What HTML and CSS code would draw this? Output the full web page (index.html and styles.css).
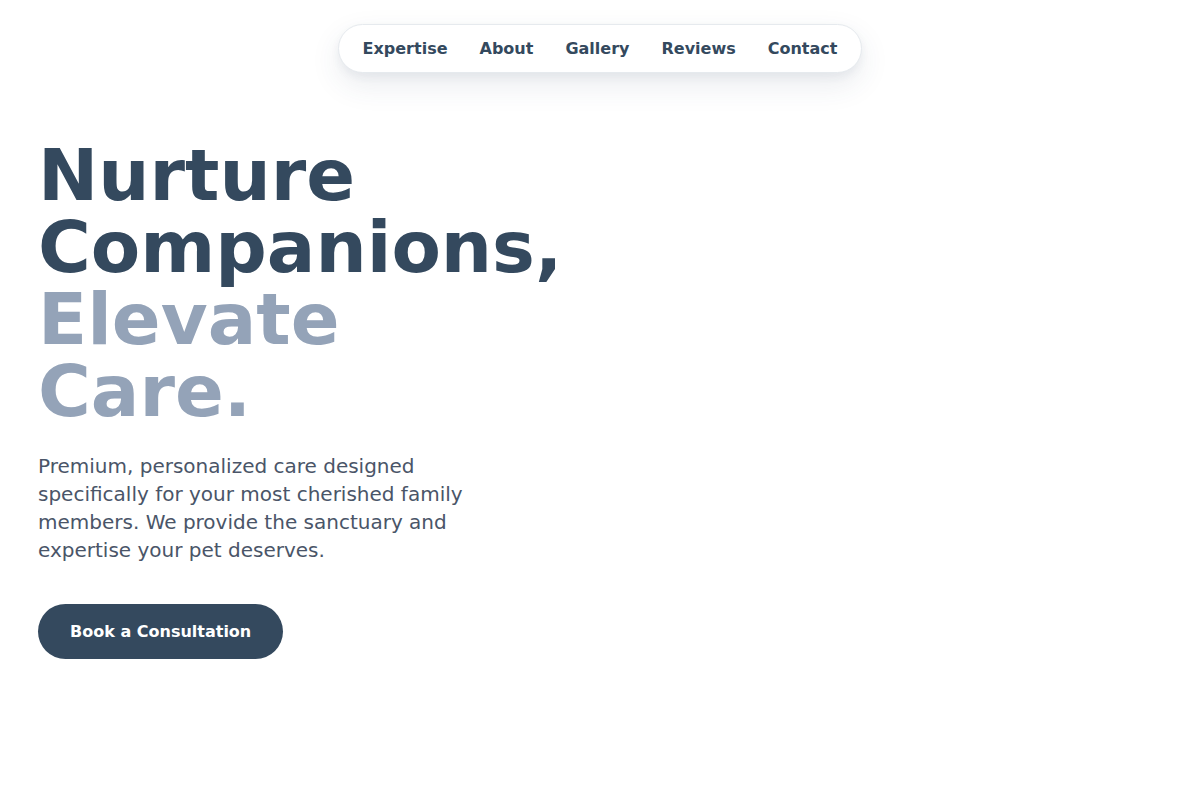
FILE: index.html
```html
<!DOCTYPE html>
<html lang="en">
<head>
<meta charset="utf-8">
<title>Nurture Companions</title>
<link rel="stylesheet" href="styles.css">
</head>
<body>
<header class="topbar">
  <nav class="nav">
    <a href="#" class="nav-link">Expertise</a>
    <a href="#" class="nav-link">About</a>
    <a href="#" class="nav-link">Gallery</a>
    <a href="#" class="nav-link">Reviews</a>
    <a href="#" class="nav-link">Contact</a>
  </nav>
</header>
<main class="hero">
  <h1 class="hero-title">Nurture<br>Companions,<br><span class="muted">Elevate<br>Care.</span></h1>
  <p class="hero-text">Premium, personalized care designed specifically for your most cherished family members. We provide the sanctuary and expertise your pet deserves.</p>
  <a href="#" class="btn">Book a Consultation</a>
</main>
</body>
</html>
```
FILE: styles.css
```css
* { box-sizing: border-box; }
html, body { margin: 0; padding: 0; background: #ffffff; }
body {
  font-family: "DejaVu Sans", "Liberation Sans", sans-serif;
  color: #34495e;
}
.topbar {
  display: flex;
  justify-content: center;
  padding-top: 24px;
}
.nav {
  display: flex;
  align-items: center;
  gap: 32px;
  height: 49px;
  padding: 0 24px;
  background: #fff;
  border: 1px solid #e6eaee;
  border-radius: 999px;
  box-shadow: 0 4px 8px rgba(52, 73, 94, 0.06), 0 12px 30px rgba(52, 73, 94, 0.10);
}
.nav-link {
  font-size: 16px;
  font-weight: 700;
  color: #34495e;
  text-decoration: none;
}
.hero {
  padding: 0 38px;
  margin-top: 66px;
}
.hero-title {
  margin: 0;
  font-size: 72px;
  line-height: 72px;
  font-weight: 700;
  color: #34495e;
}
.muted { color: #94a3b8; }
.hero-text {
  margin: 25px 0 40px;
  max-width: 460px;
  font-size: 20px;
  line-height: 28px;
  color: #4a5568;
}
.btn {
  display: inline-flex;
  align-items: center;
  height: 55px;
  padding: 0 32px 1px;
  border-radius: 999px;
  background: #34495e;
  color: #fff;
  font-size: 16px;
  font-weight: 700;
  text-decoration: none;
}
```
